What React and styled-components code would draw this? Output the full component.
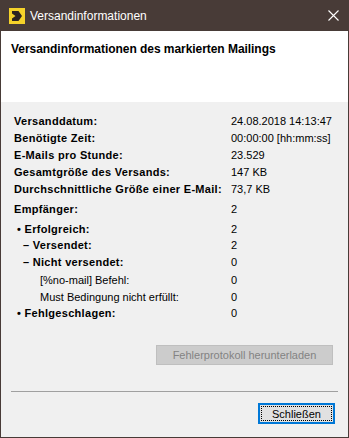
import React from "react";
import styled, { createGlobalStyle } from "styled-components";

const Global = createGlobalStyle`
  html, body { margin: 0; padding: 0; background: #f0f0f0; }
  body { font-family: "Liberation Sans", Arial, sans-serif; }
`;

const Window = styled.div`
  width: 349px;
  height: 438px;
  box-sizing: border-box;
  display: flex;
  flex-direction: column;
  border: 1px solid #483b37;
  border-top: none;
  background: #f0f0f0;
  overflow: hidden;
`;

const TitleBar = styled.div`
  height: 31px;
  flex: none;
  background: #483b37;
  display: flex;
  align-items: center;
  padding-left: 9px;
  padding-right: 10px;
  margin: 0 -1px;
  color: #ffffff;
  font-size: 12px;
`;

const TitleText = styled.span`
  margin-left: 5px;
  flex: 1;
  line-height: 16px;
`;

const Header = styled.div`
  height: 71px;
  flex: none;
  background: #ffffff;
  box-sizing: border-box;
  padding: 10px 10px 0;
  font-weight: bold;
  font-size: 12px;
  line-height: 16px;
  letter-spacing: -0.05px;
  color: #000;
`;

const Body = styled.div`
  flex: 1;
  display: flex;
  flex-direction: column;
  padding: 11px 13px 0;
  font-size: 11px;
  color: #000;
`;

const Group = styled.div`
  display: flex;
  flex-direction: column;
  margin-top: ${(p) => p.$gap || 0}px;
`;

const Row = styled.div`
  display: grid;
  grid-template-columns: 217px 1fr;
  line-height: 17px;
  height: 17px;
  margin-top: ${(p) => p.$mt || 0}px;
`;

const Label = styled.span`
  font-weight: ${(p) => (p.$bold ? "bold" : "normal")};
  letter-spacing: ${(p) => (p.$bold ? "0.3px" : "0")};
  padding-left: ${(p) => p.$indent || 0}px;
  white-space: nowrap;
`;

const Value = styled.span`
  white-space: nowrap;
`;

const ButtonRow = styled.div`
  display: flex;
  justify-content: flex-end;
  padding-right: ${(p) => p.$pr || 0}px;
  margin-top: ${(p) => p.$mt || 0}px;
`;

const DisabledButton = styled.div`
  width: 177px;
  height: 20px;
  box-sizing: border-box;
  background: #cccccc;
  border: 1px solid #bfbfbf;
  color: #838383;
  font-size: 11px;
  display: flex;
  align-items: center;
  justify-content: center;
`;

const Separator = styled.div`
  height: 1px;
  background: #a0a0a0;
  margin: 26px -3px 0 -3px;
`;

const PrimaryButton = styled.div`
  width: 77px;
  height: 21px;
  box-sizing: border-box;
  border: 2px solid #0078d7;
  background: #e1e1e1;
  padding: 1px;
  display: flex;
`;

const FocusRect = styled.div`
  flex: 1;
  border: 1px dotted #000;
  display: flex;
  align-items: center;
  justify-content: center;
  font-size: 11px;
  color: #000;
`;

const AppIcon = () => (
  <svg width="16" height="16" viewBox="0 0 16 16">
    <rect x="0" y="0" width="16" height="16" fill="#f5d22a" />
    <polygon
      points="3,3 9.5,3 13,8 9.5,13 3,13 3,10.5 6.5,8 3,5.5"
      fill="#2d2421"
    />
  </svg>
);

const CloseIcon = () => (
  <svg width="11" height="11" viewBox="0 0 11 11">
    <path d="M0.5 0.5 L10.5 10.5 M10.5 0.5 L0.5 10.5" stroke="#ffffff" strokeWidth="1.1" />
  </svg>
);

const stats = [
  ["Versanddatum:", "24.08.2018 14:13:47"],
  ["Benötigte Zeit:", "00:00:00 [hh:mm:ss]"],
  ["E-Mails pro Stunde:", "23.529"],
  ["Gesamtgröße des Versands:", "147 KB"],
  ["Durchschnittliche Größe einer E-Mail:", "73,7 KB"],
];

const recipients = [
  { label: "Empfänger:", value: "2", bold: true, indent: 0, mt: 0 },
  { label: "• Erfolgreich:", value: "2", bold: true, indent: 3, mt: 3 },
  { label: "– Versendet:", value: "2", bold: true, indent: 9, mt: -1 },
  { label: "– Nicht versendet:", value: "0", bold: true, indent: 9, mt: 0 },
  { label: "[%no-mail] Befehl:", value: "0", bold: false, indent: 26, mt: 1 },
  { label: "Must Bedingung nicht erfüllt:", value: "0", bold: false, indent: 26, mt: 0 },
  { label: "• Fehlgeschlagen:", value: "0", bold: true, indent: 3, mt: -1 },
];

export default function App() {
  return (
    <>
      <Global />
      <Window>
        <TitleBar>
          <AppIcon />
          <TitleText>Versandinformationen</TitleText>
          <CloseIcon />
        </TitleBar>
        <Header>Versandinformationen des markierten Mailings</Header>
        <Body>
          <Group>
            {stats.map(([l, v]) => (
              <Row key={l}>
                <Label $bold>{l}</Label>
                <Value>{v}</Value>
              </Row>
            ))}
          </Group>
          <Group $gap={3}>
            {recipients.map((r) => (
              <Row key={r.label} $mt={r.mt}>
                <Label $bold={r.bold} $indent={r.indent}>
                  {r.label}
                </Label>
                <Value>{r.value}</Value>
              </Row>
            ))}
          </Group>
          <ButtonRow $mt={23} $pr={2}>
            <DisabledButton>Fehlerprotokoll herunterladen</DisabledButton>
          </ButtonRow>
          <Separator />
          <ButtonRow $mt={11} $pr={-3}>
            <PrimaryButton>
              <FocusRect>Schließen</FocusRect>
            </PrimaryButton>
          </ButtonRow>
        </Body>
      </Window>
    </>
  );
}
